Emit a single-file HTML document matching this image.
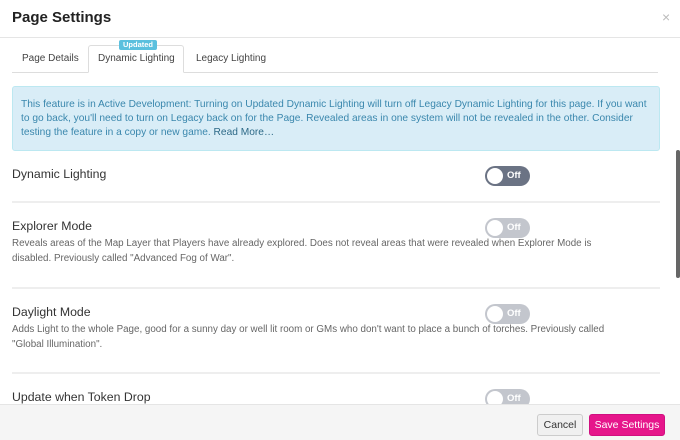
<!DOCTYPE html>
<html><head><style>
*{margin:0;padding:0;box-sizing:border-box}
body{width:680px;height:440px;overflow:hidden;background:#fff;font-family:"Liberation Sans",sans-serif;position:relative;color:#333}
.a{position:absolute;white-space:nowrap}
.title{left:12px;top:9px;font-size:15px;font-weight:bold;color:#222}
.close{left:662px;top:9px;font-size:14px;color:#bbb}
.hl{left:0;top:37px;width:680px;height:1px;background:#e5e5e5}
.tabline{left:12px;top:72px;width:646px;height:1px;background:#ddd}
.tab{top:53px;font-size:10px;color:#444}
.tabbox{left:88px;top:45px;width:96px;height:28px;border:1px solid #ddd;border-bottom:1px solid #fff;background:#fff;border-radius:3px 3px 0 0}
.badge{left:119px;top:40px;width:38px;height:10px;background:#5bc0de;color:#fff;font-size:7.5px;font-weight:bold;text-align:center;line-height:10px;border-radius:2px}
.alert{left:12px;top:86px;width:648px;height:65px;background:#d9edf7;border:1px solid #bce8f1;border-radius:3px;padding:11px 8px;font-size:10.2px;line-height:14px;color:#3a87ad;white-space:normal}
.alert b{font-weight:normal;color:#2d6987}
.h{left:12px;font-size:12.3px;color:#333}
.d{left:12px;font-size:9.8px;line-height:14.5px;color:#666;width:600px;white-space:normal}
.div{left:12px;width:648px;height:2px;background:#eee}
.tg{left:485px;width:45px;height:20px;border-radius:10px;background:#6b7384}
.tg:before{content:"";position:absolute;left:2px;top:2px;width:16px;height:16px;border-radius:50%;background:#fff}
.tg:after{content:"Off";position:absolute;left:22px;top:4px;font-size:9.5px;font-weight:bold;color:#fff}
.f{opacity:.4}
.foot{left:0;top:404px;width:680px;height:36px;background:#f5f5f5;border-top:1px solid #e5e5e5}
.btn{top:414px;height:22px;font-size:10.5px;line-height:20px;text-align:center;border-radius:3px}
.sb{left:676px;top:150px;width:4px;height:128px;background:#666;border-radius:2px}
</style></head><body>
<div class="a title">Page Settings</div>
<div class="a close">×</div>
<div class="a hl"></div>
<div class="a tabline"></div>
<div class="a tabbox"></div>
<div class="a badge">Updated</div>
<div class="a tab" style="left:22px">Page Details</div>
<div class="a tab" style="left:98px">Dynamic Lighting</div>
<div class="a tab" style="left:196px">Legacy Lighting</div>
<div class="a alert">This feature is in Active Development: Turning on Updated Dynamic Lighting will turn off Legacy Dynamic Lighting for this page. If you want to go back, you'll need to turn on Legacy back on for the Page. Revealed areas in one system will not be revealed in the other. Consider testing the feature in a copy or new game. <b>Read More…</b></div>

<div class="a h" style="top:167px">Dynamic Lighting</div>
<div class="a tg" style="top:166px"></div>
<div class="a div" style="top:201px"></div>

<div class="a h" style="top:219px">Explorer Mode</div>
<div class="a tg f" style="top:218px"></div>
<div class="a d" style="top:237px">Reveals areas of the Map Layer that Players have already explored. Does not reveal areas that were revealed when Explorer Mode is disabled. Previously called "Advanced Fog of War".</div>
<div class="a div" style="top:287px"></div>

<div class="a h" style="top:305px">Daylight Mode</div>
<div class="a tg f" style="top:304px"></div>
<div class="a d" style="top:323px">Adds Light to the whole Page, good for a sunny day or well lit room or GMs who don't want to place a bunch of torches. Previously called "Global Illumination".</div>
<div class="a div" style="top:372px"></div>

<div class="a h" style="top:390px">Update when Token Drop</div>
<div class="a tg f" style="top:389px"></div>

<div class="a foot"></div>
<div class="a btn" style="left:537px;width:46px;border:1px solid #ccc;background:#f0f0f0;color:#333">Cancel</div>
<div class="a btn" style="left:589px;width:76px;background:#e6168b;color:#fff;border:1px solid #d01080">Save Settings</div>
<div class="a sb"></div>
</body></html>
